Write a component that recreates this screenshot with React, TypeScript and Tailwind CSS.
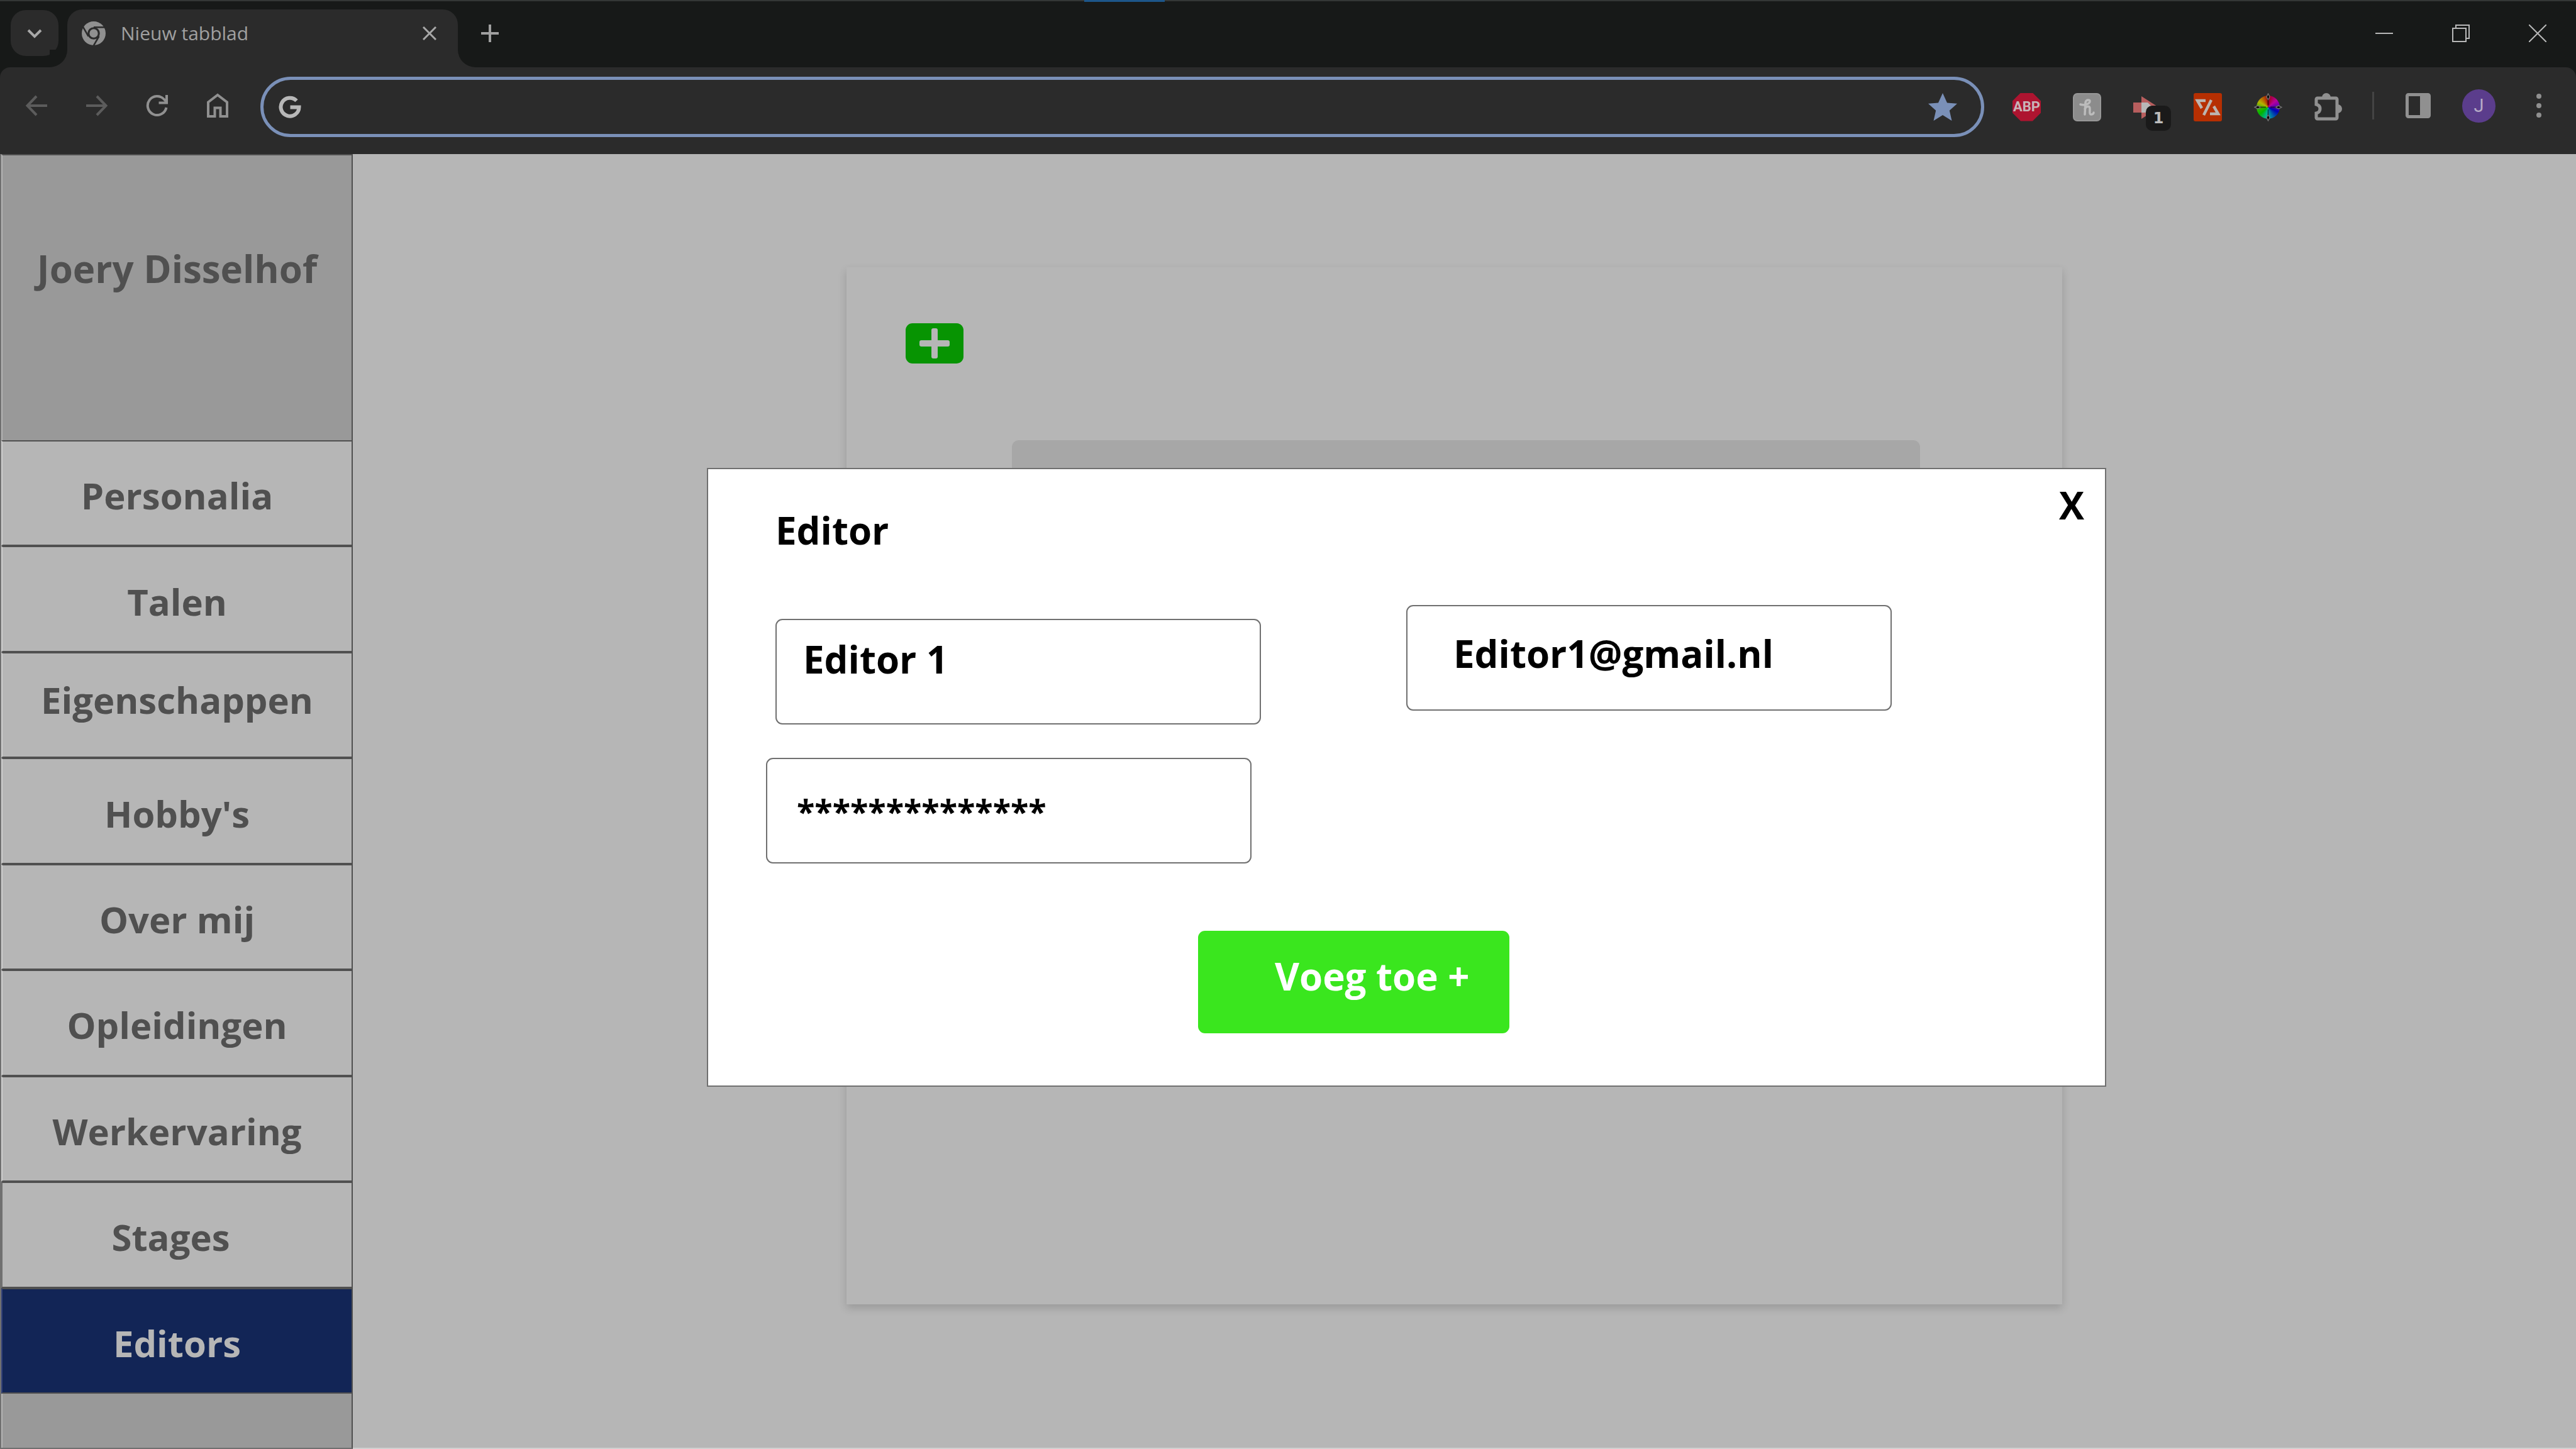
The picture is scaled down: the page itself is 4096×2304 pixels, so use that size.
import type { ReactNode } from 'react';

type NavItem = { label: string; box: string };

const NAV_ITEMS: NavItem[] = [
  { label: 'Personalia', box: 'border-l-[#cfcfcf] bg-[#b6b6b6] pt-2 text-[#505050]' },
  { label: 'Talen', box: 'border-l-[#cfcfcf] bg-[#b6b6b6] pt-2 text-[#505050]' },
  { label: 'Eigenschappen', box: 'border-l-[#cfcfcf] bg-[#b6b6b6] pb-4 text-[#505050]' },
  { label: "Hobby's", box: 'border-l-[#cfcfcf] bg-[#b6b6b6] pt-2 text-[#505050]' },
  { label: 'Over mij', box: 'border-l-[#cfcfcf] bg-[#b6b6b6] pt-2 text-[#505050]' },
  { label: 'Opleidingen', box: 'border-l-[#cfcfcf] bg-[#b6b6b6] pt-2 text-[#505050]' },
  { label: 'Werkervaring', box: 'border-l-[#cfcfcf] bg-[#b6b6b6] pt-2 text-[#505050]' },
  { label: 'Stages', box: 'border-l-[#707070] bg-[#b6b6b6] pt-2 pr-5 text-[#505050]' },
  { label: 'Editors', box: 'border-l-[#32427a] bg-[#122556] pt-2 text-[#b6b6b6]' },
];

function ToolButton({ label, children }: { label: string; children: ReactNode }) {
  return (
    <button type="button" aria-label={label} className="flex shrink-0 items-center justify-center">
      {children}
    </button>
  );
}

function ChromeLogo() {
  return (
    <svg viewBox="0 0 24 24" className="size-[38px]" aria-hidden="true">
      <circle cx="12" cy="12" r="12" fill="#909090" />
      <g stroke="#2b2b2b" strokeWidth="1.6" fill="none">
        <path d="M12 5.900H23" />
        <path d="M6.700 15L1.200 5.400" />
        <path d="M17.300 15L11.800 24.500" />
      </g>
      <circle cx="12" cy="12" r="5.2" fill="#909090" stroke="#2b2b2b" strokeWidth="2" />
    </svg>
  );
}

function TabStrip() {
  return (
    <div className="relative flex h-[107px] items-center border-t-2 border-[#343736] bg-[#171918] pr-[47px] pl-[17px]">
      <span className="absolute -top-0.5 left-[42.1%] h-[3px] w-32 bg-[#1d568a]" />
      <button
        type="button"
        aria-label="Tabbladen zoeken"
        className="mb-1 flex h-[73px] w-[76px] items-center justify-center rounded-[24px] bg-[#2b2b2b]"
      >
        <svg viewBox="0 0 24 24" className="size-6" fill="none" stroke="#a8a8a8" strokeWidth="4" aria-hidden="true">
          <path d="M2 7l10 10L22 7" />
        </svg>
      </button>
      <div className="relative ml-[14px] flex w-[621px] items-center self-stretch pt-[13px]">
        <div className="relative flex h-full flex-1 items-center rounded-t-[24px] bg-[#2b2b2b] pr-[34px] pb-4 pl-[23px]">
          <ChromeLogo />
          <span className="ml-6 flex-1 text-[30px] leading-10 text-[#a0a0a0]">Nieuw tabblad</span>
          <button type="button" aria-label="Tabblad sluiten">
            <svg viewBox="0 0 22 22" className="size-[22px]" stroke="#a8a8a8" strokeWidth="3" aria-hidden="true">
              <path d="M1 1l20 20M21 1L1 21" />
            </svg>
          </button>
        </div>
        <span className="absolute bottom-0 -left-[28px] size-[28px] bg-[#2b2b2b]">
          <span className="block size-full rounded-br-[28px] bg-[#171918]" />
        </span>
        <span className="absolute -right-[28px] bottom-0 size-[28px] bg-[#2b2b2b]">
          <span className="block size-full rounded-bl-[28px] bg-[#171918]" />
        </span>
      </div>
      <button type="button" aria-label="Nieuw tabblad openen" className="mb-1 ml-[37px]">
        <svg viewBox="0 0 28 28" className="size-7" stroke="#a0a0a0" strokeWidth="4" aria-hidden="true">
          <path d="M0 14h28M14 0v28" />
        </svg>
      </button>
      <div className="mb-1 ml-auto flex items-center gap-[94px]">
        <button type="button" aria-label="Minimaliseren">
          <svg viewBox="0 0 28 28" className="size-7" stroke="#b8b8b8" strokeWidth="2" aria-hidden="true">
            <path d="M0 14h28" />
          </svg>
        </button>
        <button type="button" aria-label="Verkleinen">
          <svg viewBox="0 0 28 28" className="size-7" fill="none" stroke="#b8b8b8" strokeWidth="2" aria-hidden="true">
            <path d="M1 6h21v21H1zM6 6V1h21v21h-5" />
          </svg>
        </button>
        <button type="button" aria-label="Sluiten">
          <svg viewBox="0 0 28 28" className="size-7" stroke="#b8b8b8" strokeWidth="2" aria-hidden="true">
            <path d="M0 0l28 28M28 0L0 28" />
          </svg>
        </button>
      </div>
    </div>
  );
}

function AddressBar() {
  return (
    <div className="ml-[50px] flex h-24 min-w-0 flex-1 items-center rounded-full border-[5px] border-[#7a90b8] pr-[38px] pl-6">
      <svg viewBox="0 0 36 36" className="size-9 shrink-0" fill="none" stroke="#b8b8b8" strokeWidth="6" aria-hidden="true">
        <path d="M28.500 8.200A14.500 14.500 0 1 0 32.500 18.500H18.500" />
      </svg>
      <input
        type="text"
        aria-label="Adresbalk"
        className="min-w-0 flex-1 bg-transparent px-6 text-[30px] text-[#b8b8b8] outline-none"
      />
      <button type="button" aria-label="Bladwijzer">
        <svg viewBox="0 0 46 44" className="h-11 w-[46px]" fill="#7a90b8" aria-hidden="true">
          <path d="M23 0l7 15.500 16 1.300-12.200 10.900L37.500 44 23 35 8.500 44l3.700-16.300L0 16.800l16-1.300z" />
        </svg>
      </button>
    </div>
  );
}

function Extensions() {
  return (
    <div className="ml-[45px] flex items-center gap-[51px]">
      <ToolButton label="Adblock Plus">
        <span className="flex size-[45px] items-center justify-center bg-[#ae1430] font-[Roboto] text-[22px] leading-none font-bold text-[#c8b4b8] [clip-path:polygon(29%_0,71%_0,100%_29%,100%_71%,71%_100%,29%_100%,0_71%,0_29%)]">
          ABP
        </span>
      </ToolButton>
      <ToolButton label="Honey">
        <svg viewBox="0 0 45 45" className="size-[45px]" fill="none" aria-hidden="true">
          <rect x="1" y="1" width="43" height="43" rx="6" fill="#8c8c8c" stroke="#979797" strokeWidth="2" />
          <path
            d="M12 18c6 2 15-1 15-5 0-3-6-3-7 2l-1 19M19 25c3-5 8-5 8 0 0 4-1 9 2 9 2 0 4-1 4-3"
            stroke="#bcbcbc"
            strokeWidth="3.500"
            strokeLinecap="round"
          />
        </svg>
      </ToolButton>
      <ToolButton label="Extensie met 1 melding">
        <span className="relative block size-[45px]">
          <svg viewBox="0 0 45 45" className="size-[45px]" aria-hidden="true">
            <path d="M0 15h13V5l28 18-28 18V31H0z" fill="#b85e5e" />
            <path d="M13 15h10l8 8-8 8H13z" fill="#b8b8b8" />
          </svg>
          <span className="absolute top-5 left-5 flex h-10 w-10 items-center justify-center rounded-[10px] bg-[#1a1a1a] font-['DejaVu_Sans'] text-[24px] leading-none font-bold text-[#bcbcbc]">
            1
          </span>
        </span>
      </ToolButton>
      <ToolButton label="Percentage-extensie">
        <svg viewBox="0 0 45 45" className="size-[45px]" fill="none" stroke="#bcb4b0" strokeWidth="4.500" aria-hidden="true">
          <rect width="45" height="45" rx="3" fill="#b62f02" stroke="none" />
          <path d="M28 11L16 35" />
          <path d="M19 12H6l7 12" />
          <path d="M26 33h13l-7-12" />
        </svg>
      </ToolButton>
      <ToolButton label="Kleurkiezer">
        <span className="relative flex size-[45px] items-center justify-center">
          <span className="size-[37px] rounded-full bg-[conic-gradient(#a00010,#b8009c_50deg,#5a00b4_88deg,#0000b4_115deg,#0078a8_160deg,#00b4a0_190deg,#00b400_230deg,#38b400_265deg,#b4b400_300deg,#b46000_330deg,#a00010)]" />
          <svg viewBox="0 0 45 45" className="absolute inset-0 size-[45px]" fill="#000" stroke="#707070" strokeWidth="1.500" aria-hidden="true">
            <path d="M22.500 1l2.500 5-2.500 5-2.500-5zM22.500 34l2.500 5-2.500 5-2.500-5zM1 22.500l5-2.500 5 2.500-5 2.500zM34 22.500l5-2.500 5 2.500-5 2.500z" />
            <path d="M22.500 10v9M22.500 26v9M10 22.500h9M26 22.500h9" stroke="#000" strokeOpacity="0.5" strokeWidth="2" />
          </svg>
        </span>
      </ToolButton>
      <ToolButton label="Extensies">
        <svg viewBox="0 0 45 46" className="h-[46px] w-[45px]" fill="none" aria-hidden="true">
          <path
            d="M5 9h29a2 2 0 0 1 2 2v29a2 2 0 0 1-2 2H5a2 2 0 0 1-2-2v-7c8-2 8-12 0-14v-8a2 2 0 0 1 2-2z"
            stroke="#909090"
            strokeWidth="5"
          />
          <path d="M12 8a7 7 0 0 1 14 0zM37 19a7 7 0 0 1 0 14z" fill="#909090" />
        </svg>
      </ToolButton>
    </div>
  );
}

function Toolbar() {
  return (
    <div className="bg-[#171918]">
      <div className="flex items-center rounded-t-[16px] bg-[#2b2b2b] pt-[15px] pr-[55px] pb-[27px] pl-10">
        <div className="mb-1 flex items-center gap-[60px]">
          <ToolButton label="Terug">
            <svg viewBox="0 0 36 36" className="size-9" fill="none" stroke="#5c5c5c" strokeWidth="4" aria-hidden="true">
              <path d="M35 18H4M18 3L3.500 18 18 33" />
            </svg>
          </ToolButton>
          <ToolButton label="Vooruit">
            <svg viewBox="0 0 36 36" className="size-9" fill="none" stroke="#5c5c5c" strokeWidth="4" aria-hidden="true">
              <path d="M1 18h31M18 3l14.500 15L18 33" />
            </svg>
          </ToolButton>
          <ToolButton label="Vernieuwen">
            <svg viewBox="0 0 36 36" className="size-9" fill="none" stroke="#909090" strokeWidth="4" aria-hidden="true">
              <path d="M32.500 21A15 15 0 1 1 29 8l4 4.500" />
              <path d="M33 1v12.500H20.500" />
            </svg>
          </ToolButton>
          <ToolButton label="Startpagina">
            <svg viewBox="0 0 36 40" className="h-10 w-9" fill="none" stroke="#909090" strokeWidth="4" aria-hidden="true">
              <path d="M3 14.500L18 3l15 11.500V37H22.500V23.500h-9V37H3z" />
            </svg>
          </ToolButton>
        </div>
        <AddressBar />
        <Extensions />
        <div className="mb-1 flex items-center">
          <span className="mr-[50px] ml-[47px] h-11 w-[3px] bg-[#444444]" />
          <ToolButton label="Zijpaneel">
            <svg viewBox="0 0 40 40" className="size-10" aria-hidden="true">
              <rect x="2.500" y="2.500" width="35" height="35" rx="2" fill="none" stroke="#909090" strokeWidth="5" />
              <path d="M23 2h15v36H23z" fill="#909090" />
            </svg>
          </ToolButton>
          <button
            type="button"
            aria-label="Profiel"
            className="mr-[65px] ml-[50px] size-[53px] rounded-full bg-[#5b3d8c] font-[Roboto] text-[29px] leading-none text-[#b6aac6]"
          >
            J
          </button>
          <ToolButton label="Menu">
            <svg viewBox="0 0 8 38" className="h-[38px] w-2" fill="#909090" aria-hidden="true">
              <circle cx="4" cy="4" r="4" />
              <circle cx="4" cy="19" r="4" />
              <circle cx="4" cy="34" r="4" />
            </svg>
          </ToolButton>
        </div>
      </div>
    </div>
  );
}

function Sidebar() {
  return (
    <aside className="flex w-[561px] shrink-0 flex-col border-r-2 border-b-2 border-l-2 border-r-[#505050] border-b-[#707070] border-l-[#707070] bg-[#999999] leading-[80px] font-bold">
      <h1 className="h-[455px] border-t-2 border-l-2 border-t-[#505050] border-l-[#b4b4b4] pt-[140px] text-center text-[60px] leading-[80px] text-[#505050]">
        Joery Disselhof
      </h1>
      <nav className="grid h-[1516px] auto-rows-fr text-[58px]">
        {NAV_ITEMS.map((item) => (
          <a
            key={item.label}
            href="#"
            className={`flex items-center justify-center border-y-2 border-l-2 border-y-[#505050] ${item.box}`}
          >
            {item.label}
          </a>
        ))}
      </nav>
      <div className="flex-1 border-l-2 border-[#b4b4b4]" />
    </aside>
  );
}

function EditorDialog() {
  return (
    <form
      role="dialog"
      aria-labelledby="dialog-title"
      className="flex flex-1 flex-col self-start border-2 border-[#707070] bg-white pb-[83px] text-[60px] leading-[80px] font-bold text-black"
    >
      <div className="flex items-start justify-between pt-[17px] pr-[33px] pl-[107px]">
        <h2 id="dialog-title" className="pt-10">
          Editor
        </h2>
        <button type="button" aria-label="Sluiten">
          X
        </button>
      </div>
      <div className="flex items-start gap-[231px] pt-[79px] pl-[92px]">
        <div className="flex flex-col gap-[53px] pt-[22px]">
          <input
            type="text"
            aria-label="Naam"
            defaultValue="Editor 1"
            className="ml-[15px] h-[168px] w-[772px] rounded-[11px] border-2 border-[#707070] pb-10 pl-[42px] outline-none"
          />
          <input
            type="text"
            aria-label="Wachtwoord"
            defaultValue="**************"
            className="h-[168px] w-[772px] rounded-[11px] border-2 border-[#707070] pl-[47px] text-[52px] outline-none"
          />
        </div>
        <input
          type="email"
          aria-label="E-mailadres"
          defaultValue="Editor1@gmail.nl"
          className="h-[168px] w-[772px] rounded-[11px] border-2 border-[#707070] pb-[14px] pl-[73px] outline-none"
        />
      </div>
      <button
        type="submit"
        className="mt-[107px] ml-[779px] h-[163px] w-[495px] rounded-[11px] bg-[#3ae61e] pb-5 pl-[122px] text-left text-white"
      >
        Voeg toe +
      </button>
    </form>
  );
}

export default function App() {
  return (
    <div className="flex min-h-screen flex-col bg-[#b6b6b6] font-['Open_Sans','Noto_Sans',sans-serif]">
      <header>
        <TabStrip />
        <Toolbar />
      </header>
      <div className="relative flex flex-1">
        <Sidebar />
        <main className="flex flex-1 flex-col border-b-2 border-[#d0d0d0] pt-[180px] pr-[817px] pb-[228px] pl-[785px]">
          <section className="flex flex-1 flex-col bg-[#b6b6b6] pt-[89px] shadow-[0_6px_13px_rgba(0,0,0,0.16)]">
            <button
              type="button"
              aria-label="Editor toevoegen"
              className="ml-[94px] flex h-16 w-[92px] items-center justify-center rounded-[11px] bg-[#079402]"
            >
              <svg viewBox="0 0 48 48" className="size-12" fill="#b6b6b6" aria-hidden="true">
                <rect x="0" y="19" width="48" height="10" rx="3" />
                <rect x="19" y="0" width="10" height="48" rx="3" />
              </svg>
            </button>
            <div className="mt-[122px] mr-[226px] ml-[263px] h-[800px] rounded-[11px] bg-[#a7a7a7]" />
          </section>
        </main>
        <div className="absolute inset-0 flex pt-[499px] pr-[747px] pl-[1124px]">
          <EditorDialog />
        </div>
      </div>
    </div>
  );
}
